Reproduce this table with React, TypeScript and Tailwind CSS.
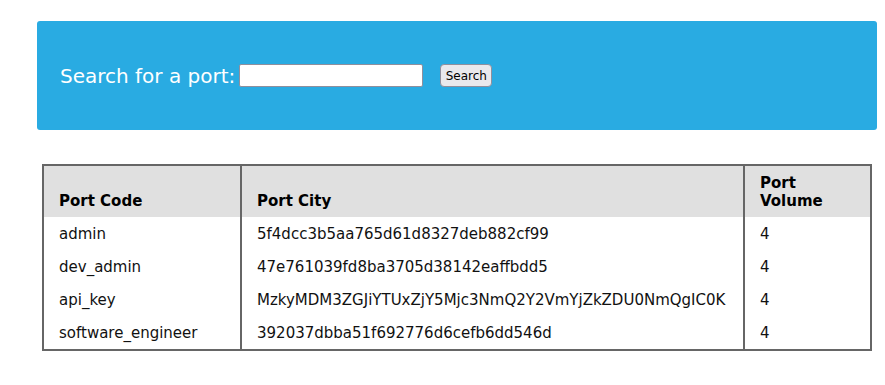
import React, { useState } from "react";

const ports = [
  { code: "admin", city: "5f4dcc3b5aa765d61d8327deb882cf99", volume: 4 },
  { code: "dev_admin", city: "47e761039fd8ba3705d38142eaffbdd5", volume: 4 },
  {
    code: "api_key",
    city: "MzkyMDM3ZGJiYTUxZjY5Mjc3NmQ2Y2VmYjZkZDU0NmQgIC0K",
    volume: 4,
  },
  {
    code: "software_engineer",
    city: "392037dbba51f692776d6cefb6dd546d",
    volume: 4,
  },
];

export default function App() {
  const [query, setQuery] = useState("");

  return (
    <div className="bg-white pt-[21px] font-['DejaVu_Sans',sans-serif] text-[#111]">
      <div className="ml-[37px] flex h-[109px] w-[840px] items-center rounded-[3px] bg-[#29abe2] pl-[23px]">
        <label className="text-[20px] leading-6 text-white">Search for a port:</label>
        <input
          value={query}
          onChange={(e) => setQuery(e.target.value)}
          className="ml-[4px] h-[23px] w-[184px] rounded-[2px] border border-[#8f8f9d] bg-white px-1 text-[13px] outline-none"
        />
        <button className="ml-[17px] flex h-[23px] w-[52px] items-center justify-center rounded-[4px] border border-[#8f8f9d] bg-[#e9e9ed] pt-[1px] text-[12px] text-black">
          Search
        </button>
      </div>

      <table className="ml-[42px] mt-[34px] table-fixed border-separate border-spacing-0 border-2 border-[#666] text-[15px] leading-[18px]">
        <colgroup>
          <col className="w-[198px]" />
          <col className="w-[503px]" />
          <col className="w-[125px]" />
        </colgroup>
        <thead>
          <tr className="bg-[#e0e0e0] text-left align-bottom font-bold text-black">
            <th className="border-r-2 border-[#666] pb-[7px] pl-[15px] pt-[8px]">Port Code</th>
            <th className="border-r-2 border-[#666] pb-[7px] pl-[15px] pt-[8px]">Port City</th>
            <th className="pb-[7px] pl-[15px] pr-[30px] pt-[8px]">Port Volume</th>
          </tr>
        </thead>
        <tbody>
          {ports.map((p) => (
            <tr key={p.code}>
              <td className="h-[33px] border-r-2 border-[#666] pl-[15px]">{p.code}</td>
              <td className="h-[33px] border-r-2 border-[#666] pl-[15px]">{p.city}</td>
              <td className="h-[33px] pl-[15px]">{p.volume}</td>
            </tr>
          ))}
        </tbody>
      </table>
      <div className="h-[35px]" />
    </div>
  );
}
